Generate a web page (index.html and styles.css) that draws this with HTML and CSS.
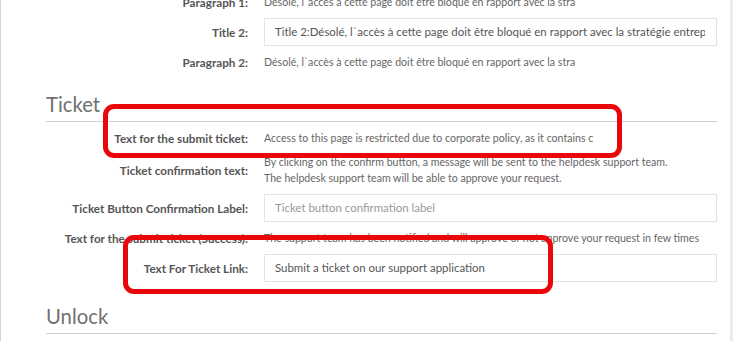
FILE: index.html
```html
<!DOCTYPE html>
<html>
<head>
<meta charset="utf-8">
<link rel="stylesheet" href="styles.css">
</head>
<body>
<div class="panel">
  <div class="form">
    <div class="label">Paragraph 1:</div>
    <div class="value">Désolé, l`accès à cette page doit être bloqué en rapport avec la stra</div>

    <div class="label">Title 2:</div>
    <div class="input"><span class="input-text">Title 2:Désolé, l`accès à cette page doit être bloqué en rapport avec la stratégie entreprise</span></div>

    <div class="label">Paragraph 2:</div>
    <div class="value">Désolé, l`accès à cette page doit être bloqué en rapport avec la stra</div>
  </div>

  <h2 class="section-title">Ticket</h2>
  <div class="form">
    <div class="label">Text for the submit ticket:</div>
    <div class="value">Access to this page is restricted due to corporate policy, as it contains c</div>

    <div class="label">Ticket confirmation text:</div>
    <div class="value">By clicking on the confirm button, a message will be sent to the helpdesk support team.<br>The helpdesk support team will be able to approve your request.</div>

    <div class="label">Ticket Button Confirmation Label:</div>
    <div class="input placeholder"><span class="input-text">Ticket button confirmation label</span></div>

    <div class="label">Text for the submit ticket (Success):</div>
    <div class="value">The support team has been notified and will approve or not approve your request in few times</div>

    <div class="label">Text For Ticket Link:</div>
    <div class="input"><span class="input-text">Submit a ticket on our support application</span></div>
  </div>

  <h2 class="section-title">Unlock</h2>

  <div class="highlight highlight-one"></div>
  <div class="highlight highlight-two"></div>
</div>
</body>
</html>
```

FILE: styles.css
```css
html, body {
  margin: 0;
  padding: 0;
  background: #ffffff;
  overflow: hidden;
}

body {
  font-family: Lato, "Open Sans", sans-serif;
  color: #666;
  width: 745px;
  height: 341px;
}

.panel {
  position: relative;
  width: 733px;
  height: 400px;
  border-left: 1px solid #d4d4d4;
  border-right: 3px solid #ececec;
  margin-top: -6px;
  padding: 0 13px 0 45px;
  box-sizing: border-box;
}

.form {
  display: grid;
  grid-template-columns: 202px minmax(0, 1fr);
  column-gap: 16px;
  row-gap: 8px;
  align-items: center;
}

.label {
  text-align: right;
  font-size: 11.7px;
  font-weight: 700;
  color: #555;
  line-height: 16px;
  white-space: nowrap;
}

.value {
  font-size: 10.6px;
  line-height: 16px;
  color: #666;
  white-space: nowrap;
  overflow: hidden;
}

.input {
  display: flex;
  min-width: 0;
  height: 28px;
  box-sizing: border-box;
  border: 1px solid #e3e3e3;
  padding: 0 11px 0 10px;
  font-size: 11.45px;
  line-height: 26px;
  color: #555;
}

.input-text {
  flex: 1;
  min-width: 0;
  white-space: nowrap;
  overflow: hidden;
}

.input.placeholder {
  color: #999;
}

.section-title {
  margin: 22px 0 8px;
  padding-bottom: 4px;
  border-bottom: 1px solid #cfcfcf;
  font-size: 20.3px;
  font-weight: 400;
  line-height: 25px;
  color: #707070;
}

.highlight {
  position: absolute;
  border: 5px solid #e8070b;
  border-radius: 11px;
  box-sizing: border-box;
}

.highlight-one {
  left: 102px;
  top: 110px;
  width: 519px;
  height: 54px;
}

.highlight-two {
  left: 122px;
  top: 241px;
  width: 430px;
  height: 59px;
}
```
